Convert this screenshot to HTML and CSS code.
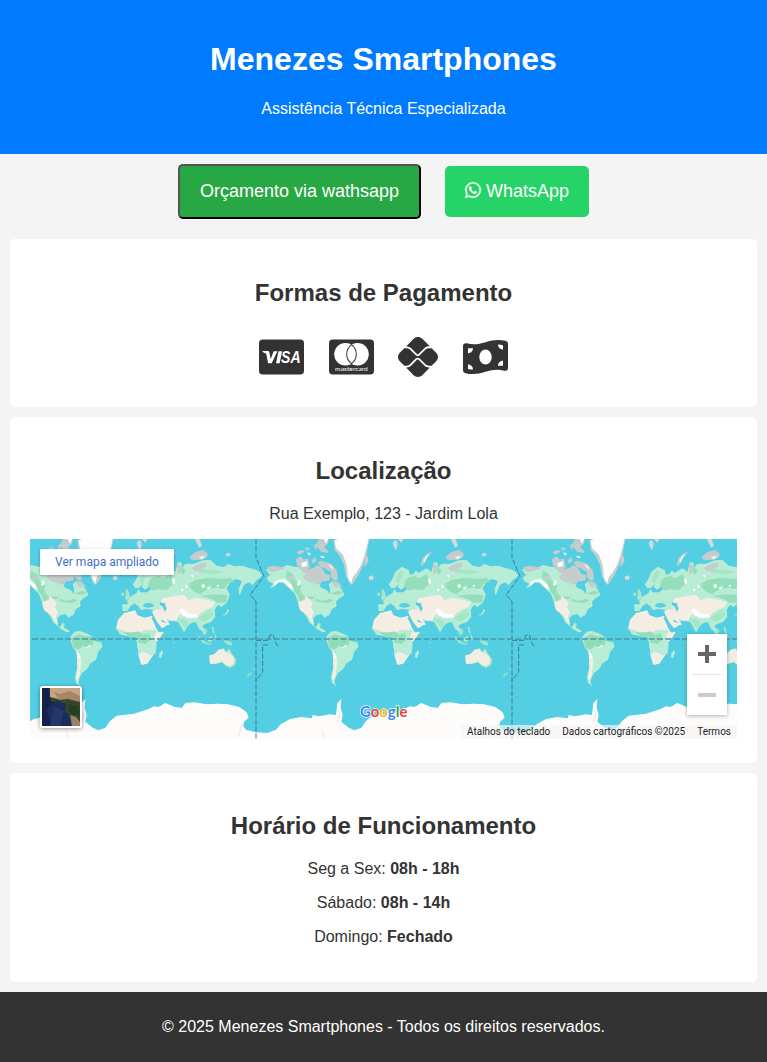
FILE: index.html
```html
<!DOCTYPE html>
<html lang="pt-BR">
<head>
<meta charset="utf-8">
<title>Menezes Smartphones</title>
<link rel="stylesheet" href="styles.css">
</head>
<body>
<header class="header">
  <h1>Menezes Smartphones</h1>
  <p>Assistência Técnica Especializada</p>
</header>

<div class="actions">
  <button class="btn btn-quote" type="button">Orçamento via wathsapp</button>
  <a class="btn btn-whatsapp"><svg class="wa-icon" viewBox="0 0 448 512"><path fill="currentColor" stroke="currentColor" stroke-width="10" d="M380.9 97.1C339 55.1 283.2 32 223.9 32c-122.4 0-222 99.6-222 222 0 39.1 10.2 77.3 29.6 111L0 480l117.7-30.9c32.4 17.7 68.9 27 106.1 27h.1c122.3 0 224.1-99.6 224.1-222 0-59.3-25.2-115-67.1-157zm-157 341.6c-33.2 0-65.7-8.9-94-25.7l-6.7-4-69.8 18.3L72 359.2l-4.4-7c-18.5-29.4-28.2-63.3-28.2-98.2 0-101.7 82.8-184.5 184.6-184.5 49.3 0 95.6 19.2 130.4 54.1 34.8 34.9 56.2 81.2 56.1 130.5 0 101.8-84.9 184.6-186.6 184.6zm101.2-138.2c-5.5-2.8-32.8-16.2-37.9-18-5.1-1.9-8.8-2.8-12.5 2.8-3.7 5.6-14.3 18-17.6 21.8-3.2 3.7-6.5 4.2-12 1.4-32.6-16.3-54-29.1-75.5-66-5.7-9.8 5.7-9.1 16.3-30.3 1.8-3.7.9-6.9-.5-9.7-1.4-2.8-12.5-30.1-17.1-41.2-4.5-10.8-9.1-9.3-12.5-9.5-3.2-.2-6.9-.2-10.6-.2-3.7 0-9.7 1.4-14.8 6.9-5.1 5.6-19.4 19-19.4 46.3 0 27.3 19.9 53.7 22.6 57.4 2.8 3.7 39.1 59.7 94.8 83.8 35.2 15.2 49 16.5 66.6 13.9 10.7-1.6 32.8-13.4 37.4-26.4 4.6-13 4.6-24.1 3.2-26.4-1.3-2.5-5-3.9-10.5-6.6z"/></svg>WhatsApp</a>
</div>

<section class="card">
  <h2>Formas de Pagamento</h2>
  <div class="payments">
    <svg class="pay" viewBox="0 0 576 512"><rect y="32" width="576" height="448" rx="48"/><path fill="#fff" d="M46 180h66c12 0 18 6 20 16l18 84 38-98h48l-74 154h-46L93 218c-9-12-27-20-47-27z"/><path fill="#fff" d="M250 182h46l-32 154h-46z"/><text class="visa-text" x="282" y="336" textLength="250" lengthAdjust="spacingAndGlyphs">SA</text></svg>
    <svg class="pay" viewBox="0 0 576 512"><rect y="32" width="576" height="448" rx="48"/><circle cx="211" cy="220" r="144" fill="#fff"/><circle cx="365" cy="220" r="144" fill="#fff"/><path d="M288 98c82 66 82 178 0 244c-82-66-82-178 0-244z" fill="#fff" stroke="#333" stroke-width="13"/><text class="mc-text" x="78" y="432" textLength="420" lengthAdjust="spacingAndGlyphs">mastercard</text></svg>
    <svg class="pay pay-pix" viewBox="0 0 512 512"><path d="M242.4 292.5C247.8 287.1 257.1 287.1 262.5 292.5L339.5 369.5C353.7 383.7 372.6 391.5 392.6 391.5H407.7L310.6 488.6C280.3 518.1 231.1 518.1 200.8 488.6L103.3 391.2H112.6C132.6 391.2 151.5 383.4 165.7 369.2L242.4 292.5zM262.5 218.9C256.1 224.4 247.9 224.5 242.4 218.9L165.7 142.2C151.5 127.1 132.6 120.2 112.6 120.2H103.3L200.7 22.8C231.1-7.6 280.3-7.6 310.6 22.8L407.8 119.9H392.6C372.6 119.9 353.7 127.7 339.5 141.9L262.5 218.9zM112.6 142.7C126.4 142.7 139.1 148.3 149.7 158.1L226.4 234.8C233.6 241.1 243 245.6 252.5 245.6C261.9 245.6 271.3 241.1 278.5 234.8L355.5 157.8C365.3 148.1 378.8 142.5 392.6 142.5H430.3L488.6 200.8C518.9 231.1 518.9 280.3 488.6 310.6L430.3 368.9H392.6C378.8 368.9 365.3 363.3 355.5 353.5L278.5 276.5C264.6 262.6 240.3 262.6 226.4 276.6L149.7 353.2C139.1 363 126.4 368.6 112.6 368.6H80.8L22.8 310.6C-7.6 280.3-7.6 231.1 22.8 200.8L80.8 142.7H112.6z"/></svg>
    <svg class="pay" viewBox="0 0 576 512"><path d="M0 113c0-26 26-38 48-32c80 21 160 11 240-15c90-29 170-39 255-17c20 5 33 20 33 39v311c0 26-26 38-48 32c-80-21-160-11-240 15c-90 29-170 39-255 17C13 458 0 443 0 424z"/><ellipse cx="288" cy="256" rx="80" ry="96" fill="#fff"/><path fill="#fff" d="M64 144h64c0 36-28 64-64 64zM64 352c36 0 64 28 64 64c-23-1-43-3-64-8zM512 160c-36 0-64-28-64-64c23 1 43 3 64 8zM512 368h-64c0-36 28-64 64-64z"/></svg>
  </div>
</section>

<section class="card card-location">
  <h2>Localização</h2>
  <p>Rua Exemplo, 123 - Jardim Lola</p>
  <div class="map">
    <svg class="map-canvas" viewBox="-660 12 2121 600">
      <defs>
        <g id="world">
          <!-- North America -->
          <path fill="#b8ecd5" d="M48 104L62 95 92 98 112 90 140 97 162 92 176 108 204 104 214 118 212 140 210 155 234 168 240 178 240 160 236 148 246 138 254 142 266 150 274 162 284 180 268 190 258 200 260 214 246 222 238 240 222 248 216 238 200 240 190 250 190 268 196 278 206 264 212 266 210 278 222 284 228 290 218 292 200 282 178 262 170 246 158 230 146 212 142 196 134 176 116 158 98 142 86 142 70 156 58 158 70 146 54 138 50 128 60 120z"/>
          <path fill="#94dfba" d="M110 105l20 14 8 20 16 8-4 16 8 16 18 6 22 0-12 8-24 0-12 8-8-20-12-16-8-22-14-16zM196 190l20 8 24-6 10 4-16 8-34-4zM240 176l24-8 18 4-20 8z"/>
          <path fill="#c5cccd" d="M52 96l20-4 34 6-10 6-26 6-12 0zM118 121l14 4-2 12-14-4zM152 108l40-10 8-8 14 6 14 22 14 2-4 16-22 4-10 10-24-8-14-6-10-12 12-6zM244 141l18-2 14 16-22 2zM202 82l14-4 28 8 16 18 4 28-8 6-12-10-2-18-18-10-14-6zM138 73l14-10 8 10 14-2 6 26-14 12-20-8-6-14zM140 51l18-7 6 6-18 9zM164 37l16 2-8 10zM206 12l30 0-2 14-12 10 14 14-4 4-18-4-12-14-4 10-6-14 8-8zM184 78l10-12 6 12-10 8z"/>
          <path fill="#fcfcfb" d="M72 142l14-8 18-2 20 16 8 18-14-8-16-16-16 0-14 12zM142 140l8-6 2 14-10 6zM154 84l18-6-2 16-14 2zM172 52l12 4-8 6zM208 62l18 4-8 4zM222 12l12 0-6 14zM232 86l14 8 4 12z"/>
          <path fill="#f3ede3" d="M144 202L166 194 164 180 176 190 188 204 184 218 192 232 186 246 192 268 184 264 172 240 150 226z"/>
          <!-- Greenland and nearby islands -->
          <path fill="#c8cfd1" d="M250 16L262 12H358L350 56 356 78 348 90 342 98 346 72 330 112 310 144 304 150 300 146 288 124 282 90 268 60 254 46z"/>
          <path fill="#fdfdfd" d="M254 16L264 12H356L350 36 342 66 332 92 320 112 308 126 304 146 294 128 290 90 278 58 258 40z"/>
          <path fill="#d1dbdd" d="M356 126l8-5 8 5-4 8-10 1zM428 22l10-8 6 12-6 20-8-14zM444 12h16l-6 12zM602 12h14l8 20-8 6zM696 56l10-3 4 8-12 4z"/>
          <!-- South America -->
          <path fill="#b8ecd5" d="M230 304L242 290 256 288 276 294 292 302 302 318 322 322 326 334 312 352 306 374 288 386 280 402 264 414 256 430 254 442 258 452 246 444 244 424 250 400 252 358 236 336 230 318z"/>
          <path fill="#8fddb6" d="M234 308l22-10 14 6 22 0 8 10-6 18-14 4-14-4-12 12-14-6-6-14z"/>
          <path fill="#f3ede3" d="M248 350l10 8 4 20-2 20-4 28-8 12-4-8 6-30z"/>
          <path fill="#fcfcfb" d="M270 340l10-4 8-8 4 4-14 8zM246 348l8 6 4 16-6-2z"/>
          <!-- Europe and Asia -->
          <path fill="#b8ecd5" d="M386 228L384 208 402 208 398 194 412 184 428 174 434 160 438 172 460 172 472 162 464 154 460 160 452 164 444 156 446 148 436 158 424 160 416 148 426 134 436 110 456 95 476 106 480 118 490 118 498 106 504 114 530 100 544 110 552 82 562 82 564 98 574 86 600 86 626 76 650 74 668 92 690 96 702 86 722 94 745 92 770 100 790 106 806 120 786 138 776 150 764 142 750 150 744 164 736 182 734 162 744 138 724 132 708 144 698 160 708 180 698 204 682 216 672 210 662 224 664 246 650 262 632 268 624 272 634 286 628 292 614 280 606 262 596 262 582 272 570 292 560 274 552 260 532 258 516 248 526 260 504 280 490 262 478 240 476 224 456 222 440 226 432 212 424 208 410 212 400 228z"/>
          <path fill="#94dfba" d="M464 139L478 126 496 122 506 130 530 118 538 132 534 150 518 166 496 162 478 166 464 158zM556 92l18 12-4 16-10-8zM586 146L606 134 644 128 684 132 710 128 720 138 698 150 690 162 662 158 640 162 620 178 602 172 588 158zM620 182L660 178 700 180 696 202 670 204 654 192z"/>
          <path fill="#a6e6c8" d="M440 122l12-16 10 4-10 22-8 14-8-8zM610 246L632 238 650 220 658 238 646 252 626 260zM548 250l24 2 14 14-14 14-14-18zM610 100l50 6 30 6-30 6-46-6z"/>
          <path fill="#f3ede3" d="M504 190L536 184 572 180 584 196 604 188 640 194 664 202 656 216 632 226 618 236 610 250 584 250 556 238 548 256 528 258 514 248 504 232 498 212zM474 230L490 222 508 226 522 246 518 256 528 268 504 280 490 262z"/>
          <path fill="#fcfcfb" d="M554 222l14-2 16 16 22 2 6 8-24 4-20-8zM534 132l8-2 0 18-6-4zM560 158l10 6-6 6zM574 146l8 10-6 4zM622 150l8-4 4 10-8 4zM638 158l14-6-8 12zM590 118l8 2-2 10zM668 149l6 2-2 8z"/>
          <path fill="#56cfe4" d="M448 208l14-5 14 3 4 8-14 4-18-2zM498 202l14 2 6 18-6 8-6-14-8-6zM418 204l10 6 14 16-6 4-18-14z"/>
          <path fill="#c5cccd" d="M586 66L606 50 626 44 642 56 638 68 620 74 594 76zM592 100l24-14 22-4-4 14-26 14zM548 86l6-6 6 16-2 20-8 0zM512 91l4-20 16-16 14-4-4 6-16 10-6 22z"/>
          <path fill="#f5f8f7" d="M520 78l8-14 12-8-10 14-6 14zM614 66l20-4-10 12z"/>
          <path fill="#a8e6ca" d="M392 192l4-14-2-14 8 0 4 14 4 10-8 8zM380 180l6-8 6 4-4 8zM626 290l10-10 4 10-6 10-8-2zM610 300l14 12 12 10 16 4-2 4-24-6zM642 310l12-8 0 18-12 0zM662 294l6 14-4 12zM688 316l24 4 4 12-18-4zM700 222l6 2-6 14-18 8 14-12zM652 276l6 0 4 18-4 2zM536 324l4-4 2 6z"/>
          <!-- Africa -->
          <path fill="#f3ede3" d="M366 280L372 254 390 234 424 226 430 240 452 248 474 242 484 274 494 292 510 290 500 306 486 322 486 350 474 366 460 386 442 390 434 364 430 326 424 302 400 302 380 298z"/>
          <path fill="#b8ecd5" d="M366 278L394 290 440 292 456 284 488 286 480 306 488 326 486 350 474 362 462 356 446 350 434 360 430 326 424 302 400 302 378 298zM496 355l8-10 3 8-5 16-7-2z"/>
          <path fill="#94dfba" d="M386 290l28 3 20-4 12 10 20-4 4 20-16 12-20-4-8-18-20 2z"/>
          <path fill="none" stroke="#56cfe4" stroke-width="4" d="M474 248L490 278M496 286L510 280 522 272M502 256L514 262"/>
          <!-- Oceania -->
          <path fill="#a8e6ca" d="M646 362L662 356 674 344 690 340 694 350 706 340 714 356 726 372 724 390 708 400 696 394 684 382 662 388 648 386z"/>
          <path fill="#f3ede3" d="M646 362L662 356 674 344 690 342 694 352 706 352 720 368 720 384 710 394 696 390 684 380 662 386 648 386z"/>
          <path fill="#94dfba" d="M776 399l8 4-4 4zM758 421l14-10 2 4-12 10z"/>
          <!-- Antarctica -->
          <path fill="#fdfcfb" d="M18 592L52 594 78 584 92 568 120 552 154 546 186 550 188 540 208 544 240 538 258 540 262 504 274 492 272 518 278 540 274 560 296 578 314 586 334 578 348 558 368 542 420 536 464 522 480 514 494 516 514 504 542 516 564 518 574 504 602 502 638 508 670 506 702 508 736 516 758 532 764 548 750 560 748 574 756 584 786 592V614H18z"/>
          <path fill="#f0efec" d="M264 536L270 522 272 542 266 562 258 560zM540 520l8 4-8 8zM744 560l4 6-12 38-8 4zM216 586l4 0 2 24h-5z"/>
          <!-- Date line -->
          <path class="dateline" d="M18 12V68L42 124 0 180 18 198V612M18 316H54L60 300H70L76 320 84 336M54 330H38V412L18 436"/>
        </g>
      </defs>
      <rect x="-660" y="12" width="2121" height="600" fill="#53cee3"/>
      <use href="#world" x="-768"/>
      <use href="#world"/>
      <use href="#world" x="768"/>
      <path class="equator" d="M-654 312H1461"/>
      <text class="google" x="330" y="545" textLength="142" lengthAdjust="spacingAndGlyphs"><tspan fill="#4285f4">G</tspan><tspan fill="#ea4335">o</tspan><tspan fill="#fbbc04">o</tspan><tspan fill="#4285f4">g</tspan><tspan fill="#34a853">l</tspan><tspan fill="#ea4335">e</tspan></text>
    </svg>
    <a class="map-link">Ver mapa ampliado</a>
    <svg class="map-thumb" viewBox="0 0 38 38"><rect width="38" height="38" fill="#1c2c5c"/><path fill="#14224b" d="M0 0h8l4 14-8 8 6 16H0z"/><path fill="#233768" d="M12 18l10 5-4 15H8z"/><path fill="#344729" d="M7 0h31v38h-8l-2-10-5-5 1-7-8-3-7 1z"/><path fill="#c8a383" d="M8 0h30v11l-8-1-6-2-8 3-8-2z"/><path fill="#a88567" d="M12 4l6 2 10-3 10 5v6l-12-3-9 1z"/><path fill="#9c8067" d="M28 27l6 2 4 5v4h-8z"/><path fill="#243d24" d="M27 16l8 2 3 8-7 1-5-4z"/></svg>
    <div class="zoom">
      <span class="zoom-in"></span>
      <span class="zoom-out"></span>
    </div>
    <div class="credits"><span>Atalhos do teclado</span><span>Dados cartográficos ©2025</span><span>Termos</span></div>
  </div>
</section>

<section class="card card-hours">
  <h2>Horário de Funcionamento</h2>
  <p>Seg a Sex: <strong>08h - 18h</strong></p>
  <p>Sábado: <strong>08h - 14h</strong></p>
  <p>Domingo: <strong>Fechado</strong></p>
</section>

<footer class="footer">
  <p>© 2025 Menezes Smartphones - Todos os direitos reservados.</p>
</footer>
</body>
</html>
```

FILE: styles.css
```css
body {
  margin: 0;
  background: #f4f4f4;
  color: #333;
  font-family: "Liberation Sans", Arial, sans-serif;
  text-align: center;
}

.header {
  display: flow-root;
  height: 114px;
  padding: 20px;
  background: #007bff;
  color: #fff;
}

.actions {
  display: flex;
  justify-content: center;
  align-items: center;
  gap: 24px;
  height: 55px;
  padding: 10px 0 20px;
}

.btn {
  box-sizing: border-box;
  border-radius: 5px;
  color: #fff;
  font-family: inherit;
  font-size: 18px;
  white-space: nowrap;
}

.btn-quote {
  width: 243px;
  height: 55px;
  padding: 0;
  border: 2px outset #000;
  background: #28a745;
}

.btn-whatsapp {
  display: flex;
  align-items: center;
  justify-content: center;
  gap: 5px;
  width: 144px;
  height: 51px;
  background: #25d366;
}

.wa-icon {
  width: 16px;
  height: 18px;
  margin-bottom: 3px;
  overflow: visible;
}

.card {
  display: flow-root;
  margin: 0 10px 10px;
  padding: 20px;
  border-radius: 5px;
  background: #fff;
}

.card h2 {
  margin: 20px 0;
  line-height: 27px;
}

.card-location h2 {
  margin-bottom: 21px;
}

.card-location p {
  margin-top: 0;
}

.card-hours h2 {
  margin: 19px 0 21px;
}

.payments {
  display: flex;
  justify-content: center;
  gap: 24.5px;
  padding: 11px 0 10px;
}

.pay {
  width: 45px;
  height: 40px;
  fill: #333;
}

.pay-pix {
  width: 40px;
}

.visa-text {
  fill: #fff;
  font: italic bold 214px "Liberation Sans", sans-serif;
}

.mc-text {
  fill: #fff;
  font: 82px Lato, sans-serif;
}

.map {
  position: relative;
  height: 200px;
  margin-bottom: 4px;
  overflow: hidden;
  font-family: Roboto, sans-serif;
}

.map-canvas {
  display: block;
  width: 100%;
  height: 100%;
}

.dateline {
  fill: none;
  stroke: #437e8b;
  stroke-width: 3;
  stroke-dasharray: 16 5;
}

.equator {
  stroke: #4c98a5;
  stroke-width: 5;
  stroke-dasharray: 18 7;
}

.google {
  font: bold 43px Lato, sans-serif;
  stroke: #fff;
  stroke-width: 4;
  stroke-linejoin: round;
  paint-order: stroke;
}

.map-link {
  position: absolute;
  left: 10px;
  top: 10px;
  width: 134px;
  border-radius: 1px;
  background: #fff;
  box-shadow: 0 1px 3px rgba(0, 0, 0, .3);
  color: #3f6fc6;
  font-size: 12px;
  line-height: 26px;
}

.map-thumb {
  position: absolute;
  left: 10px;
  top: 147px;
  width: 38px;
  height: 38px;
  border: 2px solid #fff;
  border-radius: 3px;
  box-shadow: 0 1px 4px rgba(0, 0, 0, .4);
}

.zoom {
  position: absolute;
  right: 10px;
  top: 95px;
  width: 40px;
  height: 81px;
  background: #fff;
  box-shadow: 0 1px 4px rgba(0, 0, 0, .3);
}

.zoom-in,
.zoom-out {
  display: block;
  height: 40px;
  background: linear-gradient(#666, #666) center / 18px 4px no-repeat,
    linear-gradient(#666, #666) center / 4px 18px no-repeat;
}

.zoom-out {
  margin: 0 5px;
  border-top: 1px solid #e6e6e6;
  background: linear-gradient(#ccc, #ccc) center / 18px 4px no-repeat;
}

.credits {
  position: absolute;
  right: 0;
  bottom: 0;
  display: flex;
  background: rgba(245, 245, 245, .7);
  color: #222;
  font-size: 10px;
  line-height: 14px;
}

.credits span {
  padding: 0 6px;
  white-space: nowrap;
}

.footer {
  display: flow-root;
  padding: 10px;
  background: #333;
  color: #fff;
}
```
